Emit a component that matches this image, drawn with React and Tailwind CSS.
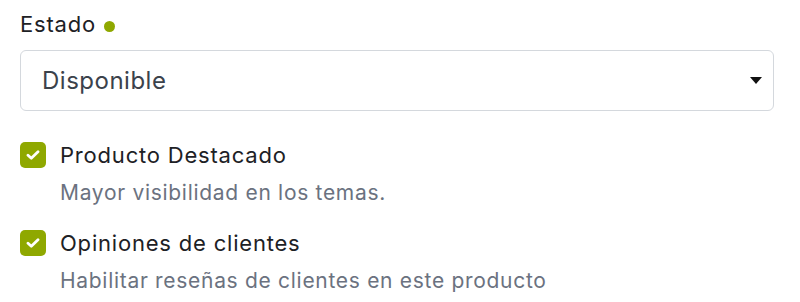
import React from "react";

function Check() {
  return (
    <span className="flex h-[26px] w-[26px] shrink-0 items-center justify-center rounded-[5px] bg-[#8fa800]">
      <svg width="14" height="10" viewBox="0 0 14 10" fill="none">
        <path d="M2 5.2 L5.3 8.2 L12 1.8" stroke="white" strokeWidth="2.8" strokeLinecap="round" strokeLinejoin="round" />
      </svg>
    </span>
  );
}

function Option({ title, desc }) {
  return (
    <div className="flex flex-col">
      <div className="flex items-center gap-[14px]">
        <Check />
        <span className="text-[22px] leading-[26px] tracking-[0.8px] text-[#1d2125]">{title}</span>
      </div>
      <span className="ml-[40px] mt-[12px] text-[21px] leading-[26px] tracking-[0.7px] text-[#6b7280]">{desc}</span>
    </div>
  );
}

export default function App() {
  return (
    <div className="h-[302px] w-[800px] overflow-hidden bg-white px-[20px] pt-[10px]" style={{ fontFamily: "Inter, 'Noto Sans', sans-serif" }}>
      <div className="flex items-center gap-[8px]">
        <span className="text-[22px] leading-[28px] tracking-[0.8px] text-[#1d2125]">Estado</span>
        <span className="mt-[5px] h-[11px] w-[11px] rounded-full bg-[#8fa800]" />
      </div>
      <div className="mt-[12px] flex h-[61px] w-[754px] items-center justify-between rounded-[6px] border border-[#d4d8dd] pl-[21px] pr-[11px]">
        <span className="text-[24px] leading-[30px] tracking-[0.5px] text-[#3b424b]">Disponible</span>
        <svg width="12" height="7" viewBox="0 0 12 7"><path d="M0 0 H12 L6 7 Z" fill="#111" /></svg>
      </div>
      <div className="mt-[31px] flex flex-col gap-[24px]">
        <Option title="Producto Destacado" desc="Mayor visibilidad en los temas." />
        <Option title="Opiniones de clientes" desc="Habilitar reseñas de clientes en este producto" />
      </div>
    </div>
  );
}
